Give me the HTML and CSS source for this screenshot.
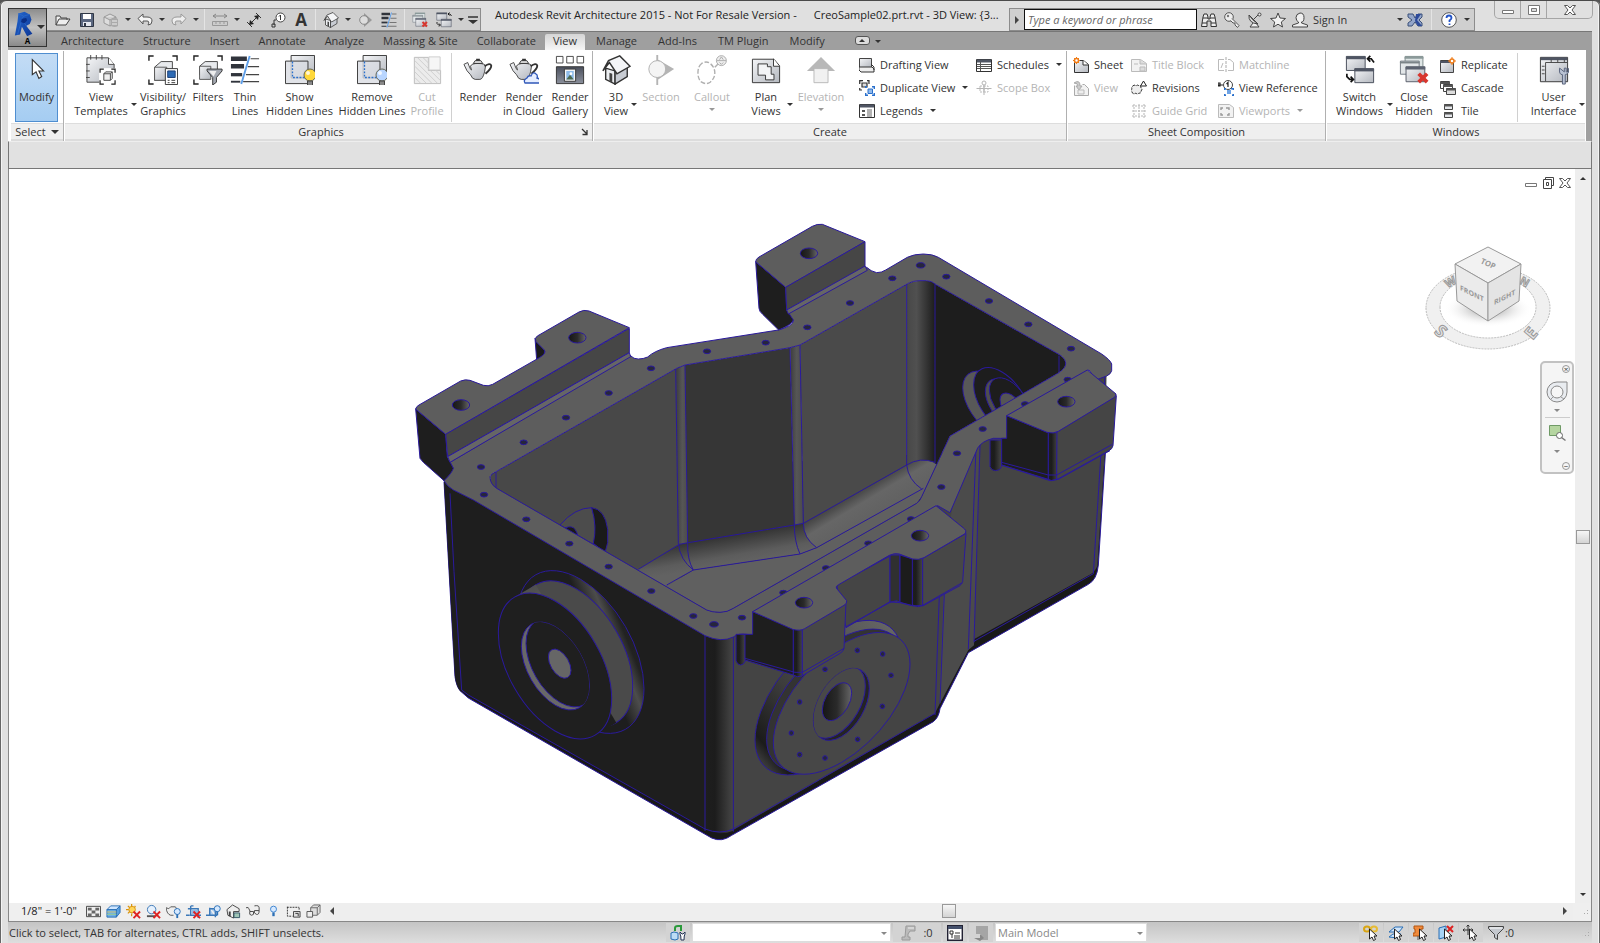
FILE: index.html
```
<!DOCTYPE html>
<html lang="en">
<head>
    <meta charset="UTF-8">
    <meta name="viewport" content="width=device-width, initial-scale=1.0">
    <title>Autodesk Revit Architecture 2015</title>
    <link rel="stylesheet" href="styles.css">
</head>
<body>

<!-- icon sprite -->
<svg class="sprite" aria-hidden="true">
    <defs>
        <linearGradient id="metal" x1="0" y1="0" x2="1" y2="1"><stop offset="0" stop-color="#f4f5f7"/><stop offset="1" stop-color="#b4b8bf"/></linearGradient>
        <linearGradient id="slate" x1="0" y1="0" x2="0" y2="1"><stop offset="0" stop-color="#4a4f5c"/><stop offset="1" stop-color="#8b909c"/></linearGradient>
        <linearGradient id="blue" x1="0" y1="0" x2="1" y2="1"><stop offset="0" stop-color="#2468d0"/><stop offset="1" stop-color="#0d3796"/></linearGradient>
    </defs>

    <symbol id="i-logo" viewBox="0 0 24 28"><path d="M5 2 12 0l6 3 2 6-2 5-4 2 7 9-6 3-6-11-2 9-6 1 3-16z" fill="url(#blue)"/><path d="M9 8l5-1 1 3-3 3-4-1z" fill="#0b2f86"/><path d="M5 2l6 3 7-2M11 5l-2 3M8 12l-4 14M12 13l2 3" fill="none" stroke="#2a68c8"/></symbol>
    <symbol id="i-open" viewBox="0 0 16 16"><path d="M1 13V4h4l1 2h6v2M1 13l3-6 11 0-4 6z" fill="#eee" stroke="#444"/></symbol>
    <symbol id="i-save" viewBox="0 0 16 16"><path d="M1.500 1.500h13v13h-13z" fill="#5b6780" stroke="#2f3644"/><path d="M4 2h8v5H4z" fill="#fff"/><path d="M4 10h8v4H4z" fill="#e4e7ee"/><path d="M5 11h2v3H5z" fill="#2f3644"/></symbol>
    <symbol id="i-sync" viewBox="0 0 16 16"><path d="M1 5l6-3 6 3v6l-6 3-6-3zM1 5l6 3 6-3M7 8v6" fill="#ddd" stroke="#999"/><path d="M8 7q4-2 7 0v7q-3 2-7 0z" fill="#aaa"/><path d="M9 9h5M9 12h5" stroke="#eee"/></symbol>
    <symbol id="i-undo" viewBox="0 0 16 16"><path d="M1 6.500 6 2v3h4q5 0 5 4t-4 4q2-4-1-4H6v3z" fill="#f5f5f5" stroke="#555"/></symbol>
    <symbol id="i-redo" viewBox="0 0 16 16"><path d="M15 6.500 10 2v3H6Q1 5 1 9t4 4q-2-4 1-4h4v3z" fill="#eee" stroke="#999"/></symbol>
    <symbol id="i-measure" viewBox="0 0 16 16"><path d="M1 4h14M4 2 1 4l3 2M12 2l3 2-3 2" fill="none" stroke="#888"/><path d="M.5 9.500h15v4H.5zM4 10v2M8 10v2M12 10v2" fill="#ccc" stroke="#999"/></symbol>
    <symbol id="i-dim" viewBox="0 0 16 16"><path d="M3 13 13 3M1 10l5 5M10 1l5 5" fill="none" stroke="#333"/><path d="M3 13l1-5 4 4zM13 3l-5 1 4 4z" fill="#222"/></symbol>
    <symbol id="i-tag" viewBox="0 0 16 16"><circle cx="10.500" cy="5.500" r="4.500" fill="#fff" stroke="#444"/><path d="M9 4.500 10.500 3v5M6 8l-2 0v5M2 12h3v3H2z" fill="none" stroke="#333"/></symbol>
    <symbol id="i-home" viewBox="0 0 32 32"><path d="M5 14v12l10 5V17z" fill="#eceef1" stroke="#333" stroke-width="1.500"/><path d="M15 17v14l13-8V11z" fill="#c8ccd3" stroke="#333" stroke-width="1.500"/><path d="M2 17 8 6 20 1l11 11-14 8L9 8z" fill="#f4f5f7" stroke="#333" stroke-width="1.500"/><path d="M9 19l3 1v9l-3-1z" fill="#444"/></symbol>
    <symbol id="i-section-s" viewBox="0 0 16 16"><path d="M7 1l8 7-8 7z" fill="#999"/><circle cx="7" cy="8" r="4.300" fill="#ddd" stroke="#888"/></symbol>
    <symbol id="i-thin" viewBox="0 0 32 32"><path d="M1 4h17M1 12h14" stroke="#30343c" stroke-width="5"/><path d="M1 21h12" stroke="#30343c" stroke-width="3.500"/><path d="M1 28.500h10" stroke="#30343c" stroke-width="2"/><path d="M22 4h9M19 12.500h12M17 21h14M14 28.500h17" stroke="#444" stroke-width="1.300"/><path d="M21 1 12 31" stroke="#5c9de8" stroke-width="2"/></symbol>
    <symbol id="i-closehid" viewBox="0 0 32 32"><path d="M6.500 1.500h19v13h-19z" fill="#dfe6e6" stroke="#7b8a8a"/><path d="M6 3h20" stroke="#8b9a9a" stroke-width="2"/><path d="M1.500 6.500h20v14h-20z" fill="#e2e6e8" stroke="#707880"/><path d="M1 8h21" stroke="#7b8488" stroke-width="2"/><path d="M7.500 12.500h20v16h-20z" fill="url(#metal)" stroke="#555b66"/><path d="M7 14h21" stroke="#5c6270" stroke-width="3"/><path d="M21 20l9 9M30 20l-9 9" stroke="#d8362e" stroke-width="4"/></symbol>
    <symbol id="i-switch" viewBox="0 0 32 32"><path d="M1.500 1.500h20v15h-20z" fill="url(#metal)" stroke="#444b58"/><path d="M1 3h21" stroke="#4f5563" stroke-width="3"/><path d="M10.500 14.500h20v15h-20z" fill="url(#metal)" stroke="#444b58"/><path d="M10 16h21" stroke="#4f5563" stroke-width="3"/><path d="M24 4h4l3 4M27 1l-3 3 3 3M2 20v3l3 3h3M6 23l3 3-3 3" fill="none" stroke="#111" stroke-width="1.800"/></symbol>
    <symbol id="i-custom" viewBox="0 0 16 16"><path d="M3 5h10" stroke="#333" stroke-width="1.500"/><path d="M3 8h10l-5 4z" fill="#333"/></symbol>

    <symbol id="i-find" viewBox="0 0 16 16"><path d="M2 5l1-3h3l1 3v2h2V5l1-3h3l1 3 1.500 9.500H10V9H6v5.500H.5z" fill="#eee" stroke="#333"/><path d="M2 6h5M9 6h5M1 11h5M10 11h5" stroke="#333"/></symbol>
    <symbol id="i-key" viewBox="0 0 16 16"><circle cx="5" cy="5" r="4.300" fill="#eee" stroke="#555"/><circle cx="4" cy="4" r="1.200" fill="#777"/><path d="M8 6.500l7 7-1.500 2L11 13v-2L9 11 6.500 8.500" fill="#eee" stroke="#555"/></symbol>
    <symbol id="i-dish" viewBox="0 0 16 16"><path d="M6 11l-3 4h9l-3-4" fill="#eee" stroke="#444"/><path d="M2 3q-1 8 9 9Q5 8 2 3z" fill="#ddd" stroke="#444"/><path d="M2 3l9 9M7 7l5-5" stroke="#444"/><circle cx="12.500" cy="2.500" r="1.500" fill="#eee" stroke="#444"/></symbol>
    <symbol id="i-star" viewBox="0 0 16 16"><path d="M8 1l2 5 5.500.5-4.200 3.500L12.500 15 8 12.200 3.500 15l1.200-5L.5 6.500 6 6z" fill="#f2f2f2" stroke="#444"/></symbol>
    <symbol id="i-user" viewBox="0 0 16 16"><path d="M8 1q4 0 4 4.500T9.500 10v1l6 2v2H.5v-2l6-2v-1Q4 9 4 5.500T8 1z" fill="#f0f0f0" stroke="#444"/></symbol>
    <symbol id="i-x" viewBox="0 0 16 16"><path d="M1 2h5l2 4 3-4h4v3l-3 3 3 3v3h-4l-3-4-3 4H1v-3l4-3-4-3z" fill="#93a5c9" stroke="#3b5079"/><path d="M9 2h5l-4 6 5 6h-4L8 9z" fill="#2d4a9a"/></symbol>
    <symbol id="i-help" viewBox="0 0 16 16"><circle cx="8" cy="8" r="7.300" fill="#fff" stroke="#555"/><path d="M5.500 6q0-2.500 2.500-2.500T10.500 6Q10.500 7 8.500 8.500v1.500M8.500 11.500v1.500" fill="none" stroke="#2455c8" stroke-width="1.800"/></symbol>

    <symbol id="i-min" viewBox="0 0 14 12"><path d="M1.500 6.500h11v3h-11z" fill="#fff" stroke="#777"/></symbol>
    <symbol id="i-max" viewBox="0 0 14 12"><path d="M1.500 1.500h11v9h-11z" fill="#fff" stroke="#777"/><path d="M4.500 4.500h5v3h-5z" fill="#ddd" stroke="#777"/></symbol>
    <symbol id="i-rest" viewBox="0 0 14 12"><path d="M4.500.5h8v8h-8z" fill="#fff" stroke="#444"/><path d="M2.500 2.500h8v9h-8z" fill="#fff" stroke="#444"/><path d="M5.500 5.500h2v3h-2z" fill="#fff" stroke="#444"/></symbol>
    <symbol id="i-close" viewBox="0 0 14 12"><path d="M1.500 1.500h3L7 4l2.500-2.500h3L9 6l3.500 4.500h-3L7 8l-2.500 2.500h-3L5 6z" fill="#fff" stroke="#555"/></symbol>

    <symbol id="i-cursor" viewBox="0 0 32 32"><path d="M11 5v16l4-3 3 7 3-2-3-6h5z" fill="#fff" stroke="#333" stroke-width="1.200"/></symbol>
    <symbol id="i-templates" viewBox="0 0 32 32"><path d="M1 3h23l6 7v19H1z" fill="url(#metal)" stroke="#444"/><path d="M24 3v7h6" fill="#fff" stroke="#444"/><path d="M5 0v5M11 0v5M17 0v5M0 10h4M0 17h4M0 24h4" stroke="#444"/><path d="M14 14h18v18H14z" fill="#fff"/><path d="M15 19v-4h4M27 15h4v4M31 27v4h-4M19 31h-4v-4" fill="none" stroke="#222" stroke-width="1.300"/><path d="M19 20l2-2h7v7l-2 2h-7zM19 20h7l2-2M26 20v7" fill="#f0f0f0" stroke="#444"/></symbol>
    <symbol id="i-visib" viewBox="0 0 32 32"><path d="M1 6V1h5M26 1h5v5M1 26v5h5" fill="none" stroke="#222" stroke-width="1.500"/><path d="M7 13l7-6h12v14l-5 6H7z" fill="#e8eaed" stroke="#444"/><path d="M7 13h13v14H7z" fill="url(#metal)" stroke="#555"/><path d="M18.500 14.500h13v17h-13z" fill="#fff" stroke="#333"/><path d="M21 17h8v7h-8z" fill="#2e6bb5" stroke="#1b3f77"/><path d="M21 27h2M25 27h4M21 29.500h2M25 29.500h4" stroke="#333"/></symbol>
    <symbol id="i-filters" viewBox="0 0 32 32"><path d="M1 6V1h5M26 1h5v5M1 26v5h5" fill="none" stroke="#222" stroke-width="1.500"/><path d="M7 12l6-5h13v14H7z" fill="#e8eaed" stroke="#444"/><path d="M7 12h12v14H7z" fill="url(#metal)" stroke="#555"/><path d="M15 15h16v2l-6 7v5l-4 3v-8l-6-7z" fill="#a4a9b2" stroke="#333"/><path d="M17 17h8l-3 6z" fill="#eee"/></symbol>
    <symbol id="i-hidden" viewBox="0 0 32 32"><path d="M6.500.5h25v24h-25z" fill="url(#metal)" stroke="#333"/><path d="M.5 6.500h24v24H.5z" fill="#d9dce2" fill-opacity=".8" stroke="#333"/><path d="M8 7v17h17" fill="none" stroke="#2a70cc" stroke-dasharray="2 1.500" stroke-width="1.400"/></symbol>
    <symbol id="i-bulb" viewBox="0 0 14 20"><circle cx="7" cy="7" r="6" fill="currentColor" stroke="#665"/><circle cx="5" cy="5" r="2" fill="#fff" opacity=".8"/><path d="M4.500 13h5v5l-2 1h-1l-2-1z" fill="#888" stroke="#444"/></symbol>
    <symbol id="i-cut" viewBox="0 0 32 32"><path d="M2.500 2.500h15v14h13v14h-28z" fill="#ececec" stroke="#bbb"/><path d="M3 6l24 24M3 12l18 18M3 18l12 12M3 24l6 6M6 3l24 24M12 3l18 18" stroke="#ccc"/><path d="M18 2h12v14H18z" fill="#f6f6f6" stroke="#ccc"/></symbol>
    <symbol id="i-pot" viewBox="0 0 32 32"><path d="M1 10l4-2q3 8 4 8l-1-4q1-3 8-3 8 0 8 3l-1 6q-2 8-5 8h-5q-3 0-5-5-4-3-7-11z" fill="url(#metal)" stroke="#444"/><path d="M23 12q6-4 7-1t-6 9" fill="none" stroke="#333" stroke-width="2"/><path d="M11 9l2-3h6l2 3z" fill="#ddd" stroke="#333"/><path d="M14 5h4" stroke="#333" stroke-width="2"/></symbol>
    <symbol id="i-cloud" viewBox="0 0 18 12"><path d="M2 11q-2-3 2-5 1-3 4-2 2-5 5-2 2 1 1 4 4 1 3 5z" fill="#e6eeff" stroke="#2f57b8" stroke-width="1.300"/></symbol>
    <symbol id="i-gallery" viewBox="0 0 32 32"><path d="M1.500 1.500h7v7h-7zM12.500 1.500h7v7h-7zM23.500 1.500h7v7h-7z" fill="#fff" stroke="#444"/><path d="M1.500 12.500h29v18h-29z" fill="url(#slate)" stroke="#333"/><path d="M10 15h12v13H10z" fill="#f6f6f6" stroke="#333"/><path d="M12 17h8v9h-8z" fill="#8dbbe8"/><path d="M12 26l4-5 4 5z" fill="#4c6a50"/><circle cx="17" cy="20" r="1.500" fill="#fff"/></symbol>
    <symbol id="i-section" viewBox="0 0 32 32"><path d="M13 0v5l17 10-17 11v6h-2V0z" fill="#b4b4b4"/><circle cx="12" cy="15" r="9" fill="#f4f4f4" stroke="#b0b0b0"/></symbol>
    <symbol id="i-callout" viewBox="0 0 32 32"><path d="M5 9q-4 3-4 10t4 10q5 3 9 0 5-4 5-10t-5-10q-4-3-9 0z" fill="none" stroke="#b0b0b0" stroke-width="1.500" stroke-dasharray="5 2"/><path d="M19 13l5-5" stroke="#b0b0b0" stroke-width="1.500"/><circle cx="26" cy="6" r="5.300" fill="#eee" stroke="#aaa"/><path d="M21 6h10M24 5l2-3 2 3M24 8l2 2 2-2" fill="none" stroke="#aaa"/></symbol>
    <symbol id="i-plan" viewBox="0 0 32 32"><path d="M1.500 4.500h23l6 7v18h-29z" fill="url(#metal)" stroke="#333"/><path d="M24 4v8h6" fill="#fff" stroke="#333"/><path d="M7.500 9.500h10v3h4v8h3v6h-9v-5h-8z" fill="#f3f4f6" stroke="#333"/></symbol>
    <symbol id="i-elev" viewBox="0 0 32 32"><path d="M16 2l15 15H1z" fill="#b8b8b8"/><path d="M8.500 14.500h15v15h-15z" fill="#f1f1f1" stroke="#b8b8b8"/></symbol>
    <symbol id="i-ui" viewBox="0 0 32 32"><path d="M1.500 2.500h29v26h-29z" fill="url(#metal)" stroke="#333"/><path d="M2 4h28" stroke="#4f5563" stroke-width="3"/><path d="M7 8v20M7 8h23M3 12h3M3 16h3M3 20h3M13 5v3M20 5v3M27 5v3" stroke="#444"/><path d="M22 14q-1 7 3 7v10h3V21q5-1 3-7v4h-2v-4h-2v4z" fill="#b9c2d3" stroke="#55607a"/></symbol>

    <symbol id="i-drafting" viewBox="0 0 16 16"><path d="M.5 1.500h12v9H.5z" fill="url(#metal)" stroke="#444"/><path d="M0 10h13l2 2v3H2l-2-2z" fill="#eee" stroke="#333"/><path d="M12 7l3 3v3" fill="none" stroke="#333"/></symbol>
    <symbol id="i-dup" viewBox="0 0 16 16"><path d="M.7 4V.7H4M8 .7h2V4M.7 8v2H3M3 3h5v4H3z" fill="#ddd" stroke="#333" stroke-width="1.200"/><path d="M6.700 8V6.700H8M13 6.700h2.300V9M15.300 13v2.300H13M9 15.300H6.700V13" fill="none" stroke="#2a70cc" stroke-width="1.400"/><path d="M9 9h4.500v4.500H9z" fill="#8fb9ec" stroke="#2a70cc"/></symbol>
    <symbol id="i-legend" viewBox="0 0 16 16"><path d="M.5 1.500h15v13H.5z" fill="#fff" stroke="#333"/><path d="M1 3h14" stroke="#4f5563" stroke-width="3"/><path d="M3 7h3v2H3zM3 11h3v2H3z" fill="#555"/><path d="M8 7h5M8 9h5M8 11h5M8 13h5" stroke="#666"/></symbol>
    <symbol id="i-sched" viewBox="0 0 16 16"><path d="M.5 2.500h15v12H.5z" fill="#fff" stroke="#333"/><path d="M1 4h14" stroke="#4f5563" stroke-width="3"/><path d="M4.500 5v9M1 7.500h14M1 9.500h14M1 11.500h14" stroke="#555"/></symbol>
    <symbol id="i-scope" viewBox="0 0 16 16"><path d="M.5 8.500h15M8 5v10" stroke="#b5b5b5"/><path d="M4 6h4v6H4zM8 6h4v6H8z" fill="none" stroke="#bbb" stroke-dasharray="2 1"/><circle cx="8" cy="3" r="2" fill="#fff" stroke="#b5b5b5"/></symbol>
    <symbol id="i-sheet" viewBox="0 0 16 16"><path d="M1.500 3.500h9l5 4v8h-14z" fill="url(#metal)" stroke="#333"/><path d="M10 3v5h5" fill="#fff" stroke="#333"/><circle cx="3.500" cy="3.500" r="2" fill="#fff" stroke="#ef7d1a" stroke-width="1.500"/><path d="M3.500 0v1.500M3.500 5.500V7M0 3.500h1.500M5.500 3.500H7M1 1l1 1M5 5l1 1M6 1 5 2M2 5 1 6" stroke="#ef7d1a"/></symbol>
    <symbol id="i-sheet-off" viewBox="0 0 16 16"><path d="M.5 2.500h9l6 4v8H.5z" fill="#f2f2f2" stroke="#bbb"/><path d="M9 3v4h6M3 7h4M9 10h5v4H9z" fill="#ddd" stroke="#bbb"/></symbol>
    <symbol id="i-place-off" viewBox="0 0 16 16"><path d="M1.500 5.500v10h14v-7l-4-4h-2" fill="#f2f2f2" stroke="#aaa"/><path d="M1 3q6-4 6 3h2L6 10 3 6h2q0-3-4-3z" fill="#ccc" stroke="#aaa"/><path d="M5 10h6v4H5z" fill="#eee" stroke="#bbb"/></symbol>
    <symbol id="i-rev" viewBox="0 0 16 16"><path d="M2 6q1-2 3 0 2-2 3 0 2-1 2 2 2 1 0 3 0 3-2 2-2 2-3 0-3 2-4-1-1-2 0-3-1-2 1-3z" fill="#eee" stroke="#333" stroke-dasharray="3 1"/><path d="M12.500 1l3 5h-6z" fill="#fff" stroke="#222"/></symbol>
    <symbol id="i-grid" viewBox="0 0 16 16"><path d="M3 1v14M8 1v14M13 1v14M1 3h14M1 8h14M1 13h14" stroke="#b5b5b5" stroke-dasharray="2 1"/></symbol>
    <symbol id="i-match" viewBox="0 0 16 16"><path d="M6 2.500H.5v11H6M10 2.500h2l3.500 3v8H10M3 11l2-5" fill="none" stroke="#bbb"/><path d="M8 0v16" stroke="#aaa" stroke-dasharray="3 1"/></symbol>
    <symbol id="i-viewref" viewBox="0 0 16 16"><circle cx="10" cy="5" r="4.500" fill="#fff" stroke="#444"/><path d="M8.500 4 10 2.500V7M0 5h5M0 3v3h2V3z" fill="none" stroke="#222" stroke-width="1.200"/><path d="M6.700 10V8.700H8M13 8.700h2.300V10M15.300 14v1.300H14M8 15.300H6.700V14" fill="none" stroke="#2a70cc" stroke-width="1.400"/><path d="M9 10h4v4H9z" fill="#6fa3e4"/></symbol>
    <symbol id="i-viewport" viewBox="0 0 16 16"><path d="M.5 1.500h11l4 3v10H.5z" fill="#f2f2f2" stroke="#bbb"/><path d="M3 7V5h2M8 5h3v2M11 10v2H9M5 12H3v-2" fill="none" stroke="#999" stroke-width="1.400"/></symbol>
    <symbol id="i-replicate" viewBox="0 0 16 16"><path d="M.5 3.500h13v12H.5z" fill="url(#metal)" stroke="#444"/><path d="M0 5h14" stroke="#4f5563" stroke-width="2"/><circle cx="12" cy="4" r="2" fill="#fff" stroke="#ef7d1a" stroke-width="1.500"/><path d="M12 0v2M12 6v2M8 4h2M14 4h2" stroke="#ef7d1a"/></symbol>
    <symbol id="i-cascade" viewBox="0 0 16 16"><path d="M.5 1.500h9v7h-9z" fill="#fff" stroke="#444"/><path d="M0 3h10" stroke="#555" stroke-width="2"/><path d="M3.500 4.500h9v7h-9z" fill="#fff" stroke="#444"/><path d="M3 6h10" stroke="#555" stroke-width="2"/><path d="M6.500 8.500h9v6h-9z" fill="#ddd" stroke="#444"/><path d="M6 9.500h10" stroke="#555" stroke-width="2"/></symbol>
    <symbol id="i-tile" viewBox="0 0 16 16"><path d="M4.500 1.500h8v5h-8zM4.500 9.500h8v5h-8z" fill="#e6e8ec" stroke="#444"/><path d="M4 2.500h9M4 10.500h9" stroke="#555" stroke-width="2"/></symbol>
    <symbol id="i-launch" viewBox="0 0 8 8"><path d="M1 1l5 5M6 2v4.500H1.500" fill="none" stroke="#333" stroke-width="1.300"/></symbol>

    <symbol id="v-detail" viewBox="0 0 16 16"><path d="M.5 2.500h15v11H.5z" fill="#eee" stroke="#444"/><path d="M2 4h4v3H2zM10 4h4v3h-4zM6 7h4v3H6zM2 10h4v3H2zM10 10h4v3h-4z" fill="#666"/></symbol>
    <symbol id="v-style" viewBox="0 0 16 16"><path d="M1 6l4-4h10l-4 4z" fill="#cfe6ff" stroke="#2a6fb5"/><path d="M11 6l4-4v7l-4 5z" fill="#5aa0de" stroke="#2a6fb5"/><path d="M1 6h10v8H1z" fill="#6fb0e6" stroke="#2a6fb5"/><path d="M1 8.500h10" stroke="#d8c26a"/><path d="M1 11h10" stroke="#9ad08a"/></symbol>
    <symbol id="v-sun" viewBox="0 0 16 16"><path d="M6 0v3M6 10v3M0 6h3M2 2l2 2M10 2 9 4M2 10l2-2" stroke="#d9930f" stroke-width="1.300"/><circle cx="6.500" cy="6" r="3.500" fill="#ffd65a" stroke="#d9930f"/><path d="M8 8l7 7M15 8l-7 7" stroke="#d22" stroke-width="2"/></symbol>
    <symbol id="v-shadow" viewBox="0 0 16 16"><circle cx="6" cy="6" r="4.500" fill="#e6f1fd" stroke="#3b78b8"/><path d="M1 13h9" stroke="#555" stroke-width="2"/><path d="M8 8l7 7M15 8l-7 7" stroke="#d22" stroke-width="2"/></symbol>
    <symbol id="v-render" viewBox="0 0 16 16"><path d="M0 4l3 1 2-2h5l2 3M0 4q1 7 5 8h3" fill="#eee" stroke="#555"/><circle cx="12" cy="8" r="3.200" fill="#d6e9ff" stroke="#2a6fb5"/><path d="M12 11v4" stroke="#2a6fb5" stroke-width="2"/></symbol>
    <symbol id="v-crop" viewBox="0 0 16 16"><path d="M5 2v10h11M2 5h11v10M0 12h4M5 2h3" fill="none" stroke="#3b78b8" stroke-width="1.500"/><path d="M6 6h6v5H6z" fill="#8fbbe8"/><path d="M8 8l7 7M15 8l-7 7" stroke="#d22" stroke-width="2"/></symbol>
    <symbol id="v-cropshow" viewBox="0 0 16 16"><path d="M4 4v8h8M4 5h6v9M0 12h4" fill="#a9cbee" stroke="#3b78b8" stroke-width="1.500"/><circle cx="12" cy="5" r="3.200" fill="#d6e9ff" stroke="#2a6fb5"/><path d="M12 8v4" stroke="#2a6fb5" stroke-width="2"/></symbol>
    <symbol id="v-lock" viewBox="0 0 16 16"><path d="M1 6l6-5 7 4v3H8v7l-6-3z" fill="#eee" stroke="#444"/><path d="M4 8v5" stroke="#444" stroke-width="2"/><path d="M8.500 9.500h6v5h-6z" fill="#9ec4b4" stroke="#356"/></symbol>
    <symbol id="v-glass" viewBox="0 0 16 16"><path d="M0 4q3-1 3 1l2 4M9 2q5-1 5 2v3" fill="none" stroke="#444"/><path d="M4 8h4q1 4-2 4t-2-4zM9 7h5q0 5-3 4t-2-4z" fill="#eee" stroke="#444"/></symbol>
    <symbol id="v-bulb" viewBox="0 0 16 16"><circle cx="8" cy="5.500" r="3.200" fill="#d6e9ff" stroke="#3b82d0"/><path d="M8 9v4" stroke="#2a6fb5" stroke-width="2.500"/></symbol>
    <symbol id="v-temp" viewBox="0 0 16 16"><path d="M1 3.500h13M1.500 3v10H7M14 4v3" fill="none" stroke="#333" stroke-dasharray="2 1"/><path d="M8 8h7v6H8z" fill="#ddd" stroke="#444"/><path d="M10 10h3v3" fill="none" stroke="#333"/></symbol>
    <symbol id="v-disp" viewBox="0 0 16 16"><path d="M5 4l3-3h7v8l-3 3H5zM5 4h7v8M12 4l3-3" fill="#ddd" stroke="#666"/><path d="M1 8h6v6H1z" fill="#eee" stroke="#555"/></symbol>

    <symbol id="s-workset" viewBox="0 0 16 16"><path d="M5 6V3q0-2 3-2h3v5" fill="none" stroke="#2b9a3b" stroke-width="2"/><path d="M1 8l3-1 4 1v6l-3 1-4-1z" fill="#bcdcf5" stroke="#2a6fb5"/><path d="M10 7v2q1 1 1 6h3q0-5 1-6V7l-2 2h-1z" fill="#fff" stroke="#235"/></symbol>
    <symbol id="s-edit" viewBox="0 0 16 16"><path d="M5 1h9v5H9l-2 3v3h2v3H1v-3h3z" fill="#bbb" stroke="#999"/><path d="M7 3h6" stroke="#eee"/></symbol>
    <symbol id="s-opt" viewBox="0 0 16 16"><path d="M.7.7h14.600v14.600H.7z" fill="#fff" stroke="#223" stroke-width="1.400"/><path d="M1 2.500h14" stroke="#44506b" stroke-width="3"/><path d="M3 6h3v3H3zM5 9v4M8 8h5M7 11h6M7 13h6" fill="none" stroke="#333"/></symbol>
    <symbol id="s-add" viewBox="0 0 16 16"><path d="M3 1h12v14H8V9H3z" fill="#a5a5a5"/><path d="M1 13h6V9l4 4-4 3" fill="#888"/></symbol>
    <symbol id="s-cur" viewBox="0 0 16 16"><path d="M6.500 4v10l2.500-2 1.500 3.500 2-1L11 11h3z" fill="#fff" stroke="#222"/></symbol>
    <symbol id="s-link" viewBox="0 0 16 16"><ellipse cx="4" cy="4" rx="3" ry="2.500" fill="none" stroke="#d9a514" stroke-width="2"/><ellipse cx="11" cy="4" rx="3" ry="2.500" fill="none" stroke="#e6bb35" stroke-width="2"/></symbol>
    <symbol id="s-under" viewBox="0 0 16 16"><path d="M1 7l6-5h8l-4 5zM1 12l4-3h8l-3 4z" fill="#cfe4fa" stroke="#2a6fb5"/></symbol>
    <symbol id="s-pin" viewBox="0 0 16 16"><path d="M1 1h9v3H8v4h3v3H0V8h2V4H1z" fill="#f08a3c" stroke="#b3540f"/><path d="M5 11v4" stroke="#555"/></symbol>
    <symbol id="s-face" viewBox="0 0 16 16"><path d="M1 3l7-2v11l-7 2z" fill="#a7d3f5" stroke="#2a6fb5"/><path d="M9 1l6 6M15 1 9 7" stroke="#d22" stroke-width="2"/></symbol>
    <symbol id="s-drag" viewBox="0 0 16 16"><path d="M5 0v10M0 5h10M3.500 1.500 5 0l1.500 1.500M1.500 3.500 0 5l1.500 1.500M8.500 3.500 10 5 8.500 6.500" fill="none" stroke="#333"/></symbol>
    <symbol id="s-filter" viewBox="0 0 16 16"><path d="M.5 1.500h15v2l-6 6v5l-3-2v-3l-6-6z" fill="#c4c8ce" stroke="#444"/><path d="M2 3h12" stroke="#fff"/></symbol>
</svg>

<div class="window">

    <header class="top">
        <button class="app-button" aria-label="Application menu">
            <svg class="logo"><use href="#i-logo"/></svg>
            <span class="app-letter">A</span>
            <i class="caret wide"></i>
        </button>
        <div class="titlebar">
            <div class="qat">
                <button aria-label="Open"><svg><use href="#i-open"/></svg></button>
                <button aria-label="Save"><svg><use href="#i-save"/></svg></button>
                <button aria-label="Synchronize"><svg><use href="#i-sync"/></svg></button>
                <i class="caret"></i>
                <button aria-label="Undo"><svg><use href="#i-undo"/></svg></button>
                <i class="caret"></i>
                <button aria-label="Redo"><svg><use href="#i-redo"/></svg></button>
                <i class="caret"></i>
                <i class="bar"></i>
                <button aria-label="Measure"><svg><use href="#i-measure"/></svg></button>
                <i class="caret"></i>
                <button aria-label="Aligned dimension"><svg><use href="#i-dim"/></svg></button>
                <button aria-label="Tag by category"><svg><use href="#i-tag"/></svg></button>
                <button class="text-tool">A</button>
                <i class="bar"></i>
                <button aria-label="Default 3D view"><svg><use href="#i-home"/></svg></button>
                <i class="caret"></i>
                <button aria-label="Section"><svg><use href="#i-section-s"/></svg></button>
                <button aria-label="Thin lines"><svg><use href="#i-thin"/></svg></button>
                <i class="bar"></i>
                <button aria-label="Close hidden windows"><svg><use href="#i-closehid"/></svg></button>
                <button aria-label="Switch windows"><svg><use href="#i-switch"/></svg></button>
                <i class="caret"></i>
                <button class="narrow" aria-label="Customize toolbar"><svg><use href="#i-custom"/></svg></button>
            </div>
            <div class="title">
                <span>Autodesk Revit Architecture 2015 - Not For Resale Version -</span>
                <span>CreoSample02.prt.rvt - 3D View: {3...</span>
            </div>
            <div class="info">
                <button class="narrow" aria-label="Collapse search"><i class="caret right"></i></button>
                <input type="text" placeholder="Type a keyword or phrase" aria-label="Search">
                <button aria-label="Search"><svg><use href="#i-find"/></svg></button>
                <button aria-label="Subscription center"><svg><use href="#i-key"/></svg></button>
                <button aria-label="Communication center"><svg><use href="#i-dish"/></svg></button>
                <button aria-label="Favorites"><svg><use href="#i-star"/></svg></button>
                <button class="signin"><svg><use href="#i-user"/></svg>Sign In<i class="caret"></i></button>
                <button aria-label="Exchange apps"><svg><use href="#i-x"/></svg></button>
                <i class="bar"></i>
                <button aria-label="Help"><svg><use href="#i-help"/></svg></button>
                <i class="caret"></i>
            </div>
            <div class="winctl">
                <button aria-label="Minimize"><svg><use href="#i-min"/></svg></button>
                <button aria-label="Restore"><svg><use href="#i-max"/></svg></button>
                <button class="wide" aria-label="Close"><svg><use href="#i-close"/></svg></button>
            </div>
        </div>
        <nav class="tabs">
            <a href="#">Architecture</a>
            <a href="#">Structure</a>
            <a href="#">Insert</a>
            <a href="#">Annotate</a>
            <a href="#">Analyze</a>
            <a href="#">Massing &amp; Site</a>
            <a href="#">Collaborate</a>
            <a href="#" class="active">View</a>
            <a href="#">Manage</a>
            <a href="#">Add-Ins</a>
            <a href="#">TM Plugin</a>
            <a href="#">Modify</a>
            <button class="ribbon-toggle" aria-label="Minimize ribbon"><i class="caret up"></i></button>
            <i class="caret"></i>
        </nav>
    </header>

    <div class="ribbon">
        <section class="panel select">
            <div class="tools">
                <button class="big pressed"><svg><use href="#i-cursor"/></svg>Modify</button>
            </div>
            <div class="panel-title">Select <i class="caret wide"></i></div>
        </section>

        <section class="panel graphics">
            <div class="tools">
                <button class="big"><svg><use href="#i-templates"/></svg>View<br>Templates<i class="caret corner"></i></button>
                <button class="big"><svg><use href="#i-visib"/></svg>Visibility/<br>Graphics</button>
                <button class="big"><svg><use href="#i-filters"/></svg>Filters</button>
                <button class="big"><svg><use href="#i-thin"/></svg>Thin<br>Lines</button>
                <button class="big"><svg><use href="#i-hidden"/><use href="#i-bulb" class="yellow" x="18" y="13" width="14" height="20"/></svg>Show<br>Hidden Lines</button>
                <button class="big"><svg><use href="#i-hidden"/><use href="#i-bulb" class="blue" x="18" y="13" width="14" height="20"/></svg>Remove<br>Hidden Lines</button>
                <button class="big" disabled><svg><use href="#i-cut"/></svg>Cut<br>Profile</button>
                <i class="divider"></i>
                <button class="big"><svg><use href="#i-pot"/></svg>Render</button>
                <button class="big"><svg><use href="#i-pot"/><use href="#i-cloud" x="14" y="17" width="18" height="12"/></svg>Render<br>in Cloud</button>
                <button class="big"><svg><use href="#i-gallery"/></svg>Render<br>Gallery</button>
            </div>
            <div class="panel-title">Graphics<button class="launcher" aria-label="Graphic display options"><svg><use href="#i-launch"/></svg></button></div>
        </section>

        <section class="panel create">
            <div class="tools">
                <button class="big"><svg><use href="#i-home"/></svg>3D<br>View<i class="caret corner"></i></button>
                <button class="big" disabled><svg><use href="#i-section"/></svg>Section</button>
                <button class="big" disabled><svg><use href="#i-callout"/></svg>Callout<i class="caret below"></i></button>
                <button class="big"><svg><use href="#i-plan"/></svg>Plan<br>Views<i class="caret corner"></i></button>
                <button class="big" disabled><svg><use href="#i-elev"/></svg>Elevation<i class="caret below"></i></button>
                <div class="stack">
                    <button><svg><use href="#i-drafting"/></svg>Drafting View</button>
                    <button><svg><use href="#i-dup"/></svg>Duplicate View<i class="caret"></i></button>
                    <button><svg><use href="#i-legend"/></svg>Legends<i class="caret"></i></button>
                </div>
                <div class="stack">
                    <button><svg><use href="#i-sched"/></svg>Schedules<i class="caret"></i></button>
                    <button disabled><svg><use href="#i-scope"/></svg>Scope Box</button>
                </div>
            </div>
            <div class="panel-title">Create</div>
        </section>

        <section class="panel sheets">
            <div class="tools">
                <div class="stack">
                    <button><svg><use href="#i-sheet"/></svg>Sheet</button>
                    <button disabled><svg><use href="#i-place-off"/></svg>View</button>
                </div>
                <div class="stack">
                    <button disabled><svg><use href="#i-sheet-off"/></svg>Title Block</button>
                    <button><svg><use href="#i-rev"/></svg>Revisions</button>
                    <button disabled><svg><use href="#i-grid"/></svg>Guide Grid</button>
                </div>
                <div class="stack">
                    <button disabled><svg><use href="#i-match"/></svg>Matchline</button>
                    <button><svg><use href="#i-viewref"/></svg>View Reference</button>
                    <button disabled><svg><use href="#i-viewport"/></svg>Viewports<i class="caret"></i></button>
                </div>
            </div>
            <div class="panel-title">Sheet Composition</div>
        </section>

        <section class="panel windows">
            <div class="tools">
                <button class="big"><svg><use href="#i-switch"/></svg>Switch<br>Windows<i class="caret corner"></i></button>
                <button class="big"><svg><use href="#i-closehid"/></svg>Close<br>Hidden</button>
                <div class="stack">
                    <button><svg><use href="#i-replicate"/></svg>Replicate</button>
                    <button><svg><use href="#i-cascade"/></svg>Cascade</button>
                    <button><svg><use href="#i-tile"/></svg>Tile</button>
                </div>
                <i class="divider"></i>
                <button class="big"><svg><use href="#i-ui"/></svg>User<br>Interface<i class="caret corner"></i></button>
            </div>
            <div class="panel-title">Windows</div>
        </section>
    </div>

    <div class="options-bar"></div>

    <div class="workspace">
        <main class="canvas">
            <svg class="model" viewBox="-1173 -123 4698 2202" role="img" aria-label="Gearbox housing, 3D view">
                <defs>
                    <linearGradient id="m-edge"><stop offset="0" stop-color="#1e1e1e"/><stop offset=".35" stop-color="#1c1c1c"/><stop offset="1" stop-color="#464646"/></linearGradient>
                    <linearGradient id="m-col"><stop offset="0" stop-color="#484848"/><stop offset=".35" stop-color="#505050"/><stop offset="1" stop-color="#1c1c1c"/></linearGradient>
                    <linearGradient id="m-soft"><stop offset="0" stop-color="#3c3c3c"/><stop offset=".5" stop-color="#565656"/><stop offset="1" stop-color="#4a4a4a"/></linearGradient>
                    <linearGradient id="m-cyl" gradientUnits="userSpaceOnUse" x1="400" y1="1100" x2="620" y2="1530"><stop offset="0" stop-color="#4a4a4a"/><stop offset=".3" stop-color="#646464"/><stop offset=".6" stop-color="#585858"/><stop offset=".85" stop-color="#444"/><stop offset="1" stop-color="#1e1e1e"/></linearGradient>
                    <linearGradient id="m-fillet" x1="1" y1="0" x2="0" y2=".6"><stop offset="0" stop-color="#1e1e1e"/><stop offset=".2" stop-color="#222"/><stop offset=".3" stop-color="#4c4c4c"/><stop offset=".45" stop-color="#1e1e1e"/><stop offset="1" stop-color="#1e1e1e"/></linearGradient>
                    <linearGradient id="m-flange" x1="0" y1=".7" x2="1" y2=".2"><stop offset="0" stop-color="#4c4c4c"/><stop offset=".1" stop-color="#1b1b1b"/><stop offset=".35" stop-color="#3c3c3c"/><stop offset="1" stop-color="#6a6a6a"/></linearGradient>
                    <linearGradient id="m-floor1" gradientUnits="userSpaceOnUse" x1="1350" y1="850" x2="1395" y2="925"><stop offset="0" stop-color="#3e3e3e"/><stop offset=".5" stop-color="#666"/><stop offset="1" stop-color="#626262"/></linearGradient>
                    <linearGradient id="m-floor2" gradientUnits="userSpaceOnUse" x1="1020" y1="972" x2="1034" y2="1056"><stop offset="0" stop-color="#343434"/><stop offset=".7" stop-color="#5c5c5c"/><stop offset="1" stop-color="#626262"/></linearGradient>
                    <linearGradient id="m-hole"><stop offset="0" stop-color="#161616"/><stop offset=".5" stop-color="#2a2a2a"/><stop offset="1" stop-color="#666"/></linearGradient>
                    <clipPath id="opening"><path d="M270 800q5-10 20-16L830 475l25-10 315-52 30-8 325-185q15-8 35-8h20q15 0 30 13l370 210q18 12 17 27 0 14-27 30L1650 678l-85 182-15 20-550 315q-18 12-40 12-24 0-40-7L290 835q-18-10-20-35z"/></clipPath>
                    <clipPath id="boss-ring"><circle r="1" transform="matrix(102 59 0 118 466 1368)"/></clipPath>
                    <clipPath id="flange-ring"><circle r="1" transform="matrix(84 -48 0 97 1324 1483)"/></clipPath>
                </defs>

                <!-- outer walls -->
                <path class="ln" fill="#181818" d="M132 815 165 1400q4 28 15 42l25 22 730 420q30 14 60-8l605-341q16-12 20-39l85-168 360-205q26-14 30-58l23-365"/>
                <path fill="#1e1e1e" d="M132 815 165 1400q4 28 15 42l25 13 710 402h20V1273L500 900z"/>
                <path fill="#444" d="M1000 1270 1060 1180 1608 887l120-175 92-95 300-140-5 240-23 350q-5 15-20 26l-360 200-90 182-17 35-605 350z"/>
                <path fill="#4b4b4b" d="M1728 712l12 0-18 594-17 14-85 160-2-8 18-460 27-152z"/>
                <path fill="url(#m-edge)" d="M915 1270h85v592q-45 18-85-5z"/>
                <path class="ln" d="M150 850l12 235 23 355 20 15 710 402q45 18 85 0l605-347M915 1273v590M1000 1275v590M1722 1294l358-203 23-363M1618 1155l-13 360M1633 1150l-13 330M1728 712l-23 606M1740 705l-18 592M2114 480v240"/>

                <!-- interior -->
                <g clip-path="url(#opening)">
                    <path fill="#484848" d="M200 400h640v800H200z"/>
                    <path fill="url(#m-soft)" d="M828 400h34l4 680h-30z"/>
                    <path fill="#363636" d="M855 400h315l13 545-320 53z"/>
                    <path fill="url(#m-soft)" d="M1170 400h31l9 540-27 10z"/>
                    <path fill="#4a4a4a" d="M1200 400l320-200v565l-310 176z"/>
                    <path fill="#1d1d1d" d="M1590 190h435v700h-450v-100h15z"/>
                    <path fill="url(#m-col)" d="M1520 190h85v600h-85z"/>
                    <path fill="#606060" d="M780 1140l100-60 320-48 50-19 320-178 90 0v400H780z"/>
                    <path fill="url(#m-floor2)" d="M700 1087l138-84 27-5 318-53 27-5 40 73-50 19-320 48-100 60z"/>
                    <path fill="url(#m-floor1)" d="M1210 940l310-175q40-25 80-8l15 10-20 70h-25l-320 176q-40-30-40-73z"/>
                    <path class="ln" d="M827 475l8 525q5 50 45 80M855 465l8 533q-2 50 17 82M1170 413l13 532q0 50 17 87M1200 405l10 535q0 45 40 73M1520 222v543q5 45 45 72M1605 222v538M715 1078l123-75 27-5 318-53 27-5 310-175q40-25 85-8M800 1125l80-45 320-48 50-19 320-178M288 785v50M1977 437v55"/>
                    <path class="ln" fill="#4c4c4c" d="M480 945q45-52 95-52 22 60 5 110z"/>
                    <path fill="#1a1a1a" class="ln" d="M575 893q40 5 48 65v40l-8 30-35-28q12-50-5-107z"/>
                    <path fill="#1a1a1a" class="ln" d="M488 958q40-25 48 32l-2 20z"/>
                    <circle class="ring" r="1" fill="#585858" transform="matrix(92 53 0 88 1780 586)"/>
                    <circle class="ring" r="1" fill="#1d1d1d" transform="matrix(85 50 0 88 1806 574)"/>
                    <circle class="ring" r="1" fill="#4e4e4e" transform="matrix(62 36 0 64 1818 580)"/>
                    <circle class="ring" r="1" fill="#1d1d1d" transform="matrix(60 34 0 62 1828 574)"/>
                    <circle class="ring" r="1" fill="#555" transform="matrix(34 20 0 36 1834 590)"/>
                </g>

                <!-- top rim -->
                <path class="ln" fill="#5d5d5d" fill-rule="evenodd" d="M132 812q0-12 28-37l-10-18L690 436q12 12 25 11 15 0 28-6 20-18 57-28l335-53q45-12 45-28l-15-22 235-138q12 12 30 16 15 0 27-8l65-38q20-10 48-10t45 10l490 290q26 18 30 30v20q-2 10-15 16l-32 12-21-30-242 137v68h-45q-34 8-47 29l-83 194-37-21-550 318v70l-23-2q-25-4-40 8-35 18-85-4L220 870l-60-30q-20-12-28-28z
                    M270 800q0 22 20 35l630 365q16 7 40 7 22 0 40-12l550-315q10-7 15-20l85-182 320-186q27-16 27-30 1-15-17-27L1610 225q-15-13-30-13h-20q-20 0-35 8l-325 185-30 8-315 52-25 10-540 309q-18 8-20 16z"/>

                <g class="bolt">
                    <ellipse cx="243" cy="771" rx="11" ry="7"/><ellipse cx="371" cy="697" rx="11" ry="7"/><ellipse cx="498" cy="623" rx="11" ry="7"/><ellipse cx="626" cy="549" rx="11" ry="7"/>
                    <ellipse cx="753" cy="475" rx="11" ry="7"/><ellipse cx="921" cy="424" rx="11" ry="7"/><ellipse cx="1097" cy="398" rx="11" ry="7"/><ellipse cx="252" cy="854" rx="11" ry="7"/>
                    <ellipse cx="379" cy="928" rx="11" ry="7"/><ellipse cx="508" cy="1001" rx="11" ry="7"/><ellipse cx="626" cy="1070" rx="11" ry="7"/><ellipse cx="754" cy="1143" rx="11" ry="7"/>
                    <ellipse cx="880" cy="1218" rx="11" ry="7"/><ellipse cx="942" cy="1243" rx="13" ry="8"/><ellipse cx="1026" cy="1223" rx="11" ry="7"/><ellipse cx="1222" cy="352" rx="11" ry="7"/>
                    <ellipse cx="1350" cy="279" rx="11" ry="7"/><ellipse cx="1477" cy="205" rx="11" ry="7"/><ellipse cx="1562" cy="166" rx="13" ry="8"/><ellipse cx="1639" cy="200" rx="11" ry="7"/>
                    <ellipse cx="1767" cy="273" rx="11" ry="7"/><ellipse cx="1885" cy="343" rx="11" ry="7"/><ellipse cx="2013" cy="416" rx="11" ry="7"/><ellipse cx="1748" cy="657" rx="11" ry="7"/>
                    <ellipse cx="1671" cy="730" rx="11" ry="7"/><ellipse cx="1624" cy="831" rx="11" ry="7"/><ellipse cx="2003" cy="509" rx="11" ry="7"/><ellipse cx="1875" cy="582" rx="11" ry="7"/>
                    <ellipse cx="1533" cy="927" rx="11" ry="7"/><ellipse cx="1405" cy="1000" rx="11" ry="7"/><ellipse cx="1278" cy="1074" rx="11" ry="7"/><ellipse cx="1150" cy="1148" rx="11" ry="7"/>
                </g>

                <!-- left double lug -->
                <path class="ln" fill="#1e1e1e" d="M47 597l90 76 5 67 18 35q-4 14-28 37L70 757l-10-12z"/>
                <path class="ln" fill="#1a1a1a" d="M405 385l30 38-5 18-20 9z"/>
                <path class="ln" fill="#5d5d5d" d="M47 597q2-8 10-12l125-72q14-6 28-2l40 15q15 4 28-3l140-80q24-14 14-24l-24-24q-6-10 4-17l125-72q14-8 30-3l121 50-551 320z"/>
                <path class="ln" fill="#464646" d="M137 673l551-318v73L143 740z"/>
                <path class="ln" fill="#666" d="M143 740 688 428l4 12L150 757z"/>

                <!-- back lug -->
                <path class="ln" fill="#1e1e1e" d="M1067 155l90 77 3 68 20 30q-4 14-44 30l-48-47q-10-8-11-18z"/>
                <path class="ln" fill="#5d5d5d" d="M1067 155q0-8 10-14l160-92q14-8 30-6l128 52-238 137z"/>
                <path class="ln" fill="#464646" d="M1157 232l238-137v75l-235 130z"/>
                <path class="ln" fill="#666" d="M1160 300l235-132 7 13-237 131z"/>

                <!-- right lug -->
                <path class="ln" fill="url(#m-edge)" d="M1770 690h35v80q-5 12-18 12t-17-12z"/>
                <path class="ln" fill="#1e1e1e" d="M1820 617l125 51v140l-140-43v-80h15z"/>
                <path class="ln" fill="url(#m-edge)" d="M1945 668h28l-3 140-15 4-10-4z"/>
                <path class="ln" fill="#454545" d="M1971 665l178-108-10 150q-2 10-12 15l-157 87z"/>
                <path class="ln" fill="#5d5d5d" d="M1820 617l242-137 86 72q2 6-8 12l-165 100q-14 8-34 3z"/>
                <path class="ln" d="M1805 757l140 38 25 0 167-92M1805 765l145 47 25-4 155-86"/>

                <!-- front flange -->
                <circle class="ring" r="1" fill="url(#m-flange)" transform="matrix(220 -127 0 194 1285 1463)"/>
                <circle class="ring" r="1" fill="#333" transform="matrix(205 -118 0 177 1305 1470)"/>
                <circle class="ring" r="1" fill="#474747" transform="matrix(205 -118 0 177 1325 1480)"/>
                <circle class="ring" r="1" fill="#242424" transform="matrix(84 -48 0 97 1324 1483)"/>
                <g clip-path="url(#flange-ring)">
                    <circle class="ring" r="1" fill="#484848" transform="matrix(84 -48 0 97 1312 1476)"/>
                </g>
                <circle class="ring" r="1" fill="url(#m-hole)" transform="matrix(44 -25 0 51 1311 1475)"/>
                <g class="bolt">
                    <circle cx="1372" cy="1321" r="7"/><circle cx="1448" cy="1332" r="7"/><circle cx="1473" cy="1396" r="7"/><circle cx="1447" cy="1489" r="7"/><circle cx="1373" cy="1588" r="7"/>
                    <circle cx="1275" cy="1644" r="7"/><circle cx="1199" cy="1634" r="7"/><circle cx="1174" cy="1569" r="7"/><circle cx="1199" cy="1476" r="7"/><circle cx="1275" cy="1378" r="7"/>
                </g>

                <!-- front double lug -->
                <path class="ln" fill="url(#m-edge)" d="M1008 1273h28v80q-5 12-14 12t-14-12z"/>
                <path class="ln" fill="#1e1e1e" d="M1058 1205l122 50v140l-145-45v-77h23z"/>
                <path class="ln" fill="#454545" d="M1310 1125l160-87v137l-132 78z"/>
                <path class="ln" fill="url(#m-edge)" d="M1180 1255h27v143l-15 2-12-5z"/>
                <path class="ln" fill="#474747" d="M1207 1253l131-78-6 140q-2 8-10 14l-115 68z"/>
                <path class="ln" fill="#303030" d="M1470 1035h30v142l-10-5-20 5z"/>
                <path class="ln" fill="#1c1c1c" d="M1500 1035l38 12v140l-38-10z"/>
                <path class="ln" fill="url(#m-edge)" d="M1537 1045h31v142l-15 3-16-5z"/>
                <path class="ln" fill="#474747" d="M1568 1045l130-75-10 145q-2 8-10 13l-110 60z"/>
                <path class="ln" fill="#5d5d5d" d="M1058 1205l550-318 86 70q8 10-2 16l-120 70q-16 8-34 4l-40-15q-14-4-30 4l-152 88q-12 6-4 14l28 34q2 8-8 14l-118 70q-14 8-36 2z"/>
                <path class="ln" d="M1035 1345l150 42 22 0 125-72M1338 1250l134-74 28 2 40 10 28-2 117-67"/>

                <!-- left bearing boss -->
                <circle class="ring" r="1" fill="url(#m-fillet)" transform="matrix(190 110 0 218 542 1326)"/>
                <circle class="ring" r="1" fill="url(#m-cyl)" transform="matrix(170 98 0 195 528 1331)"/>
                <path fill="url(#m-cyl)" d="M586 1575l63-37-242-414-63 37z"/>
                <circle class="ring" r="1" fill="#1f1f1f" transform="matrix(170 98 0 195 465 1368)"/>
                <circle class="ring" r="1" fill="#686868" transform="matrix(102 59 0 118 466 1368)"/>
                <g clip-path="url(#boss-ring)">
                    <circle class="ring" r="1" fill="#1f1f1f" transform="matrix(102 59 0 118 480 1359)"/>
                </g>
                <circle class="ring" r="1" fill="#666" transform="matrix(34 20 0 39 479 1361)"/>

                <g class="hole">
                    <ellipse cx="183" cy="585" rx="26" ry="16"/><ellipse cx="532" cy="383" rx="26" ry="16"/><ellipse cx="1227" cy="130" rx="26" ry="16"/>
                    <ellipse cx="1999" cy="575" rx="26" ry="16"/><ellipse cx="1560" cy="977" rx="26" ry="16"/><ellipse cx="1212" cy="1178" rx="26" ry="16"/>
                </g>
            </svg>

            <div class="doc-ctl">
                <button aria-label="Minimize view"><svg><use href="#i-min"/></svg></button>
                <button aria-label="Restore view"><svg><use href="#i-rest"/></svg></button>
                <button aria-label="Close view"><svg><use href="#i-close"/></svg></button>
            </div>

            <svg class="viewcube" viewBox="0 0 128 108" role="img" aria-label="ViewCube">
                <defs><radialGradient id="cube-shadow"><stop offset="0" stop-color="#888"/><stop offset="1" stop-color="#fff" stop-opacity="0"/></radialGradient></defs>
                <path fill="#f0f0f0" stroke="#bbb" stroke-dasharray="2 1" fill-rule="evenodd" d="M1 62a62 41 0 1 0 124 0a62 41 0 1 0-124 0zM15 61a48 31 0 1 0 96 0a48 31 0 1 0-96 0z"/>
                <path fill="#fff" d="M32 20h62v22H32z"/>
                <ellipse cx="63" cy="63" rx="44" ry="18" fill="url(#cube-shadow)"/>
                <text class="compass" x="11" y="92" transform="rotate(40 17 86)">S</text>
                <text class="compass" x="101" y="93" transform="rotate(-50 106 87)">E</text>
                <text class="compass small" x="20" y="40" transform="rotate(-30 25 36)">W</text>
                <text class="compass small" x="95" y="40" transform="rotate(30 100 36)">N</text>
                <path d="M30 18 63 1l33 17-33 19z" fill="#f2f2f2" stroke="#999"/>
                <path d="M30 18l33 19v38L32 55z" fill="#ebebeb" stroke="#999"/>
                <path d="M96 18 63 37v38l31-20z" fill="#e4e4e4" stroke="#999"/>
                <text class="face" transform="matrix(1 .5 0 1 35 44)">FRONT</text>
                <text class="face" transform="matrix(1 -.5 0 1 69 59)">RIGHT</text>
                <text class="face" transform="matrix(1 .45 -.5 1 55 17)">TOP</text>
            </svg>

            <div class="navbar">
                <button class="dot" aria-label="Close navigation bar">×</button>
                <button aria-label="Steering wheel"><svg viewBox="0 0 22 22"><path d="M11 1h10v10A10 10 0 1 1 11 1z" fill="#e9ecf0" stroke="#888"/><circle cx="11" cy="11" r="6" fill="#f6f6f6" stroke="#888"/><path d="M7 16l-3 3M15 16l3 2" stroke="#999"/></svg></button>
                <i class="caret"></i>
                <hr>
                <button aria-label="Zoom region"><svg viewBox="0 0 22 22"><path d="M3.500 3.500h11v10h-11z" fill="#b5d5a0" stroke="#6f9a66"/><circle cx="13.500" cy="13.500" r="3" fill="#fff" stroke="#666"/><path d="M15.500 15.500l4 3" stroke="#777" stroke-width="1.500"/></svg></button>
                <i class="caret"></i>
                <button class="dot" aria-label="Navigation bar options">−</button>
            </div>
        </main>
        <div class="scroll vertical">
            <i class="caret up"></i>
            <span class="thumb"></span>
            <i class="caret"></i>
        </div>
    </div>

    <div class="viewbar">
        <button class="scale">1/8" = 1'-0"</button>
        <button aria-label="Detail level"><svg><use href="#v-detail"/></svg></button>
        <button aria-label="Visual style"><svg><use href="#v-style"/></svg></button>
        <button aria-label="Sun path off"><svg><use href="#v-sun"/></svg></button>
        <button aria-label="Shadows off"><svg><use href="#v-shadow"/></svg></button>
        <button aria-label="Rendering dialog"><svg><use href="#v-render"/></svg></button>
        <button aria-label="Do not crop view"><svg><use href="#v-crop"/></svg></button>
        <button aria-label="Show crop region"><svg><use href="#v-cropshow"/></svg></button>
        <button aria-label="Unlocked 3D view"><svg><use href="#v-lock"/></svg></button>
        <button aria-label="Temporary hide"><svg><use href="#v-glass"/></svg></button>
        <button aria-label="Reveal hidden elements"><svg><use href="#v-bulb"/></svg></button>
        <button aria-label="Temporary view properties"><svg><use href="#v-temp"/></svg></button>
        <button aria-label="Displacement sets"><svg><use href="#v-disp"/></svg></button>
        <div class="scroll horizontal">
            <i class="caret left"></i>
            <span class="thumb"></span>
            <i class="caret right"></i>
        </div>
        <i class="grip"></i>
    </div>

    <footer class="status">
        <p>Click to select, TAB for alternates, CTRL adds, SHIFT unselects.</p>
        <div class="status-mid">
            <button aria-label="Worksets"><svg><use href="#s-workset"/></svg></button>
            <span class="combo wide"><select aria-label="Active workset"><option></option></select><i class="caret"></i></span>
            <button class="count"><svg><use href="#s-edit"/></svg>:0</button>
            <button aria-label="Design options"><svg><use href="#s-opt"/></svg></button>
            <button aria-label="Add to set" disabled><svg><use href="#s-add"/></svg></button>
            <span class="combo"><select aria-label="Design option"><option>Main Model</option></select><i class="caret"></i></span>
        </div>
        <div class="status-right">
            <button aria-label="Select links"><svg><use href="#s-link"/><use href="#s-cur"/></svg></button>
            <button aria-label="Select underlay elements"><svg><use href="#s-under"/><use href="#s-cur"/></svg></button>
            <button aria-label="Select pinned elements"><svg><use href="#s-pin"/><use href="#s-cur"/></svg></button>
            <button aria-label="Select elements by face"><svg><use href="#s-face"/><use href="#s-cur"/></svg></button>
            <button aria-label="Drag elements on selection"><svg><use href="#s-drag"/><use href="#s-cur"/></svg></button>
            <button class="filter"><svg><use href="#s-filter"/></svg>:0</button>
        </div>
        <i class="grip"></i>
    </footer>
</div>

</body>
</html>
```
FILE: styles.css
```
* {
    box-sizing: border-box;
}

body {
    margin: 0;
    background: #555;
    color: #333;
    font: 11px/14px "Open Sans", "Noto Sans", sans-serif;
}

button {
    display: flex;
    align-items: center;
    justify-content: center;
    padding: 0;
    border: 0;
    background: none;
    color: inherit;
    font: inherit;
    white-space: nowrap;
}

button:disabled {
    color: #b4b4b4;
}

svg {
    display: block;
    flex: none;
    width: 16px;
    height: 16px;
}

.sprite {
    position: absolute;
    width: 0;
    height: 0;
}

.window {
    display: flex;
    flex-direction: column;
    height: 100vh;
    padding: 0 8px;
    background: #e0e0e0;
    border-top: 1px solid #4a4a4a;
    border-radius: 6px 6px 0 0;
    box-shadow: inset 1px 0 #666, inset -1px 0 #666, inset 2px 0 #f4f4f4, inset -2px 0 #f4f4f4;
}

/* small triangles */
.caret {
    display: block;
    flex: none;
    width: 0;
    height: 0;
    border: 3px solid transparent;
    border-top-color: #333;
    border-bottom: 0;
}

.caret.wide {
    border-width: 4px 4px 0;
}

.caret.up {
    border-top: 0;
    border-bottom: 3px solid #333;
}

.caret.right {
    border: 4px solid transparent;
    border-left-color: #444;
    border-right: 0;
}

.caret.left {
    border: 4px solid transparent;
    border-right-color: #444;
    border-left: 0;
}

button:disabled .caret {
    border-top-color: #999;
}

/* title bar */
.top {
    display: grid;
    grid-template-columns: 39px 1fr;
    grid-template-rows: 30px 19px;
}

.app-button {
    position: relative;
    grid-area: 1 / 1 / 3 / 2;
    z-index: 1;
    flex-direction: column;
    align-items: flex-start;
    justify-content: flex-start;
    height: 39px;
    margin-top: 7px;
    padding: 2px 5px;
    border: 1px solid #333;
    background: linear-gradient(#8d8d8d, #c2c2c2 50%, #8a8a8a);
}

.logo {
    width: 21px;
    height: 26px;
}

.app-letter {
    width: 27px;
    color: #000;
    font-size: 8px;
    font-weight: bold;
    line-height: 8px;
}

.app-button .caret {
    position: absolute;
    top: 16px;
    right: 1px;
}

.titlebar {
    display: flex;
    align-items: flex-start;
}

.qat,
.info {
    display: flex;
    align-items: center;
    height: 23px;
    margin-top: 7px;
    border: 1px solid #8c8c8c;
    background: #cfcfcf;
}

.qat {
    padding-left: 4px;
    border-left: 0;
}

.qat button,
.info button {
    width: 24px;
    height: 21px;
}

.qat .caret {
    margin: 0 2px;
}

.qat .narrow,
.info .narrow {
    width: 14px;
}

.bar {
    width: 1px;
    height: 21px;
    margin: 0 3px;
    background: #e4e4e4;
}

.qat .text-tool {
    width: 22px;
    color: #333;
    font-size: 17px;
    font-weight: bold;
}

.title {
    display: flex;
    flex: 1;
    gap: 17px;
    padding: 7px 0 0 14px;
    color: #222;
    white-space: nowrap;
}

.info input {
    width: 173px;
    height: 21px;
    padding: 0 3px;
    border: 1px solid #111;
    background: #fff;
    font: italic 11px "Open Sans", sans-serif;
}

.info input::placeholder {
    color: #666;
}

.info button:not(.narrow) {
    width: 23px;
}

.info .signin {
    justify-content: flex-start !important;
    gap: 5px;
    width: 114px !important;
    padding-left: 3px;
}

.info .signin .caret {
    margin-left: auto;
}

.info .bar {
    margin: 0 5px;
}

.info > .caret {
    margin: 0 4px;
}

.winctl {
    display: flex;
    height: 18px;
    margin-right: -1px;
    margin-left: 19px;
    border: 1px solid #a5a5a5;
    border-top: 0;
    border-radius: 0 0 5px 5px;
}

.winctl button {
    width: 26px;
    border-right: 1px solid #a5a5a5;
}

.winctl .wide {
    width: 45px;
    border-right: 0;
}

.winctl svg,
.doc-ctl svg {
    width: 14px;
    height: 12px;
}

/* tabs */
.tabs {
    grid-area: 2 / 1 / 3 / 3;
    display: flex;
    align-items: flex-end;
    padding-left: 43px;
    border-top: 1px solid #777;
    background: #9f9f9f;
}

.tabs a {
    height: 16px;
    padding: 0 9px 0 10px;
    color: #333;
    line-height: 14px;
    text-decoration: none;
}

.tabs .active {
    padding: 0 8px;
    background: linear-gradient(#d5d5d5, #f6f6f6);
    border-radius: 2px 2px 0 0;
}

.tabs .active ~ a {
    padding: 0 10px 0 11px;
}

.ribbon-toggle {
    width: 15px;
    height: 9px;
    margin: 0 5px 5px 20px;
    border: 1px solid #555;
    border-radius: 3px;
    background: #ddd;
}

.tabs > .caret {
    margin-bottom: 7px;
}

/* ribbon */
.ribbon {
    display: flex;
    height: 91px;
    padding: 1px 6px 0 2px;
    border-right: 1px solid #8a8a8a;
    background: linear-gradient(90deg, #fff, #fff) left / calc(100% - 5px) 100% no-repeat #a0a0a0;
}

.panel {
    display: flex;
    flex-direction: column;
    border-right: 1px solid #b0b0b0;
    background: #fff;
}

.panel.select {
    width: 54px;
}

.panel.graphics {
    width: 529px;
}

.panel.create {
    width: 474px;
}

.panel.sheets {
    width: 259px;
}

.panel.windows {
    flex: 1;
    border-right: 0;
}

.tools {
    display: grid;
    height: 72px;
    padding: 2px 0 1px;
}

.select .tools {
    padding: 2px 5px 1px;
}

.graphics .tools {
    grid-template-columns: 72px 52px 38px 36px 73px 72px 38px 10px 44px 48px 44px;
    padding-left: 1px;
}

.create .tools {
    grid-template-columns: 42px 48px 54px 54px 56px 127px auto;
    padding-left: 2px;
}

.sheets .tools {
    grid-template-columns: 58px 87px auto;
    padding-left: 6px;
}

.windows .tools {
    grid-template-columns: 67px 42px 82px 1px auto;
}

.big {
    position: relative;
    display: flex;
    flex-direction: column;
    align-items: center;
    justify-content: flex-start;
    padding-top: 2px;
    text-align: center;
    line-height: 14px;
}

.big svg {
    width: 30px;
    height: 30px;
    margin-bottom: 5px;
}

.pressed {
    padding-top: 1px;
    border: 1px solid #4f8ed0;
    background: linear-gradient(#c3dcf5, #a5cdf2);
}

.windows .big:last-child {
    padding-left: 4px;
}

.yellow {
    color: #ffd83a;
}

.blue {
    color: #b9d6ff;
}

.caret.corner {
    position: absolute;
    right: 0;
    bottom: 16px;
}

.caret.below {
    margin-top: 4px;
}

.divider {
    justify-self: center;
    width: 1px;
    background: #d0d0d0;
}

.stack {
    display: flex;
    flex-direction: column;
    align-items: flex-start;
}

.create .stack,
.windows .stack {
    padding-left: 5px;
}

.create .stack:nth-child(6) {
    padding-left: 10px;
}

.create .stack:last-child {
    padding-left: 0;
}

.stack button {
    gap: 5px;
    height: 23px;
}

.stack .caret {
    margin-left: 2px;
}

.panel-title {
    position: relative;
    display: flex;
    flex: 1;
    align-items: center;
    justify-content: center;
    gap: 5px;
    margin-left: 1px;
    border-top: 1px solid #ddd;
    border-bottom: 2px solid #dcdcdc;
    background: #efefef;
    line-height: 15px;
}

.graphics .panel-title {
    padding-right: 15px;
}

.launcher {
    position: absolute;
    right: 3px;
}

.launcher svg {
    width: 8px;
    height: 8px;
}

.options-bar {
    height: 28px;
    border: 1px solid #777;
    border-top: 1px solid #eee;
    background: #e1e1e1;
}

/* drawing area */
.workspace {
    display: flex;
    flex: 1;
    min-height: 0;
    border-right: 1px solid #888;
    border-left: 1px solid #888;
}

.canvas {
    position: relative;
    flex: 1;
    min-width: 0;
    background: #fff;
}

.model {
    width: 100%;
    height: 100%;
}

.ln,
.ring,
.bolt,
.hole {
    stroke: #2a1a9c;
    stroke-width: 1;
}

.ln:not([fill]) {
    fill: none;
}

.model * {
    vector-effect: non-scaling-stroke;
}

.bolt {
    fill: #26263c;
}

.hole {
    fill: url(#m-hole);
}

.doc-ctl {
    position: absolute;
    top: 8px;
    right: 3px;
    display: flex;
    gap: 3px;
}

.viewcube {
    position: absolute;
    top: 77px;
    right: 22px;
    width: 128px;
    height: 108px;
}

.face {
    fill: #999;
    font: bold 7px "Open Sans", sans-serif;
}

.compass {
    fill: #e4e4e4;
    stroke: #999;
    font: bold 17px "Open Sans", sans-serif;
}

.compass.small {
    font-size: 11px;
}

.navbar {
    position: absolute;
    top: 192px;
    right: 1px;
    display: flex;
    flex-direction: column;
    align-items: center;
    width: 34px;
    height: 113px;
    padding: 2px;
    border: 2px solid #c2c2c2;
    border-radius: 5px;
    background: #f5f5f5;
}

.navbar svg {
    width: 22px;
    height: 22px;
}

.navbar .dot {
    align-self: flex-end;
    width: 8px;
    height: 8px;
    border: 1px solid #999;
    border-radius: 4px;
    font-size: 8px;
    line-height: 6px;
}

.navbar .dot:first-child {
    margin-bottom: 8px;
}

.navbar .dot:last-child {
    margin-top: auto;
}

.navbar .caret {
    margin-top: 6px;
    border-top-color: #888;
}

.navbar hr {
    width: 25px;
    margin: 5px 0 4px;
    border: 0;
    border-top: 1px solid #ccc;
}

.scroll {
    display: flex;
    align-items: center;
    justify-content: space-between;
    background: #eee;
}

.vertical {
    flex-direction: column;
    width: 16px;
    padding: 8px 0 7px;
}

.horizontal {
    flex: 1;
    height: 17px;
    padding: 0 6px 0 7px;
}

.thumb {
    width: 14px;
    height: 14px;
    border: 1px solid #999;
    background: linear-gradient(#f6f6f6, #d4d4d4);
}

.viewbar {
    display: flex;
    align-items: center;
    height: 19px;
    padding: 0 0 2px 6px;
    border: 1px solid #888;
    border-top: 0;
    background: #efefef;
}

.viewbar button {
    width: 20px;
}

.viewbar svg {
    width: 15px;
    height: 15px;
}

.viewbar .scale {
    width: 68px;
    color: #222;
}

.grip {
    width: 10px;
    height: 10px;
    margin: 0 1px 0 7px;
    background: radial-gradient(circle, #aaa 1px, transparent 1px) 0 0 / 3px 3px;
    clip-path: polygon(100% 0, 100% 100%, 0 100%);
}

/* status bar */
.status {
    display: flex;
    align-items: center;
    height: 21px;
    background: linear-gradient(#c4c4c4, #dedede);
}

.status p {
    width: 658px;
    margin: 0;
    padding-left: 1px;
}

.status-mid {
    display: flex;
    align-items: center;
    gap: 2px;
}

.status button {
    width: 24px;
    height: 19px;
    background: #d3d3d3;
}

.combo {
    position: relative;
    width: 152px;
}

.combo.wide {
    width: 199px;
}

.combo select {
    width: 100%;
    height: 19px;
    padding: 0 2px;
    border: 1px solid #ddd;
    border-radius: 0;
    appearance: none;
    background: #fff;
    color: #888;
    font: inherit;
}

.combo .caret {
    position: absolute;
    top: 9px;
    right: 4px;
    border-top-color: #888;
}

.status .count {
    gap: 6px;
    width: 48px;
}

.status-right {
    display: flex;
    gap: 1px;
    margin-left: auto;
}

.status-right .filter {
    gap: 1px;
    width: 34px;
    background: none;
}

.status .grip {
    margin-left: 63px;
}
```
